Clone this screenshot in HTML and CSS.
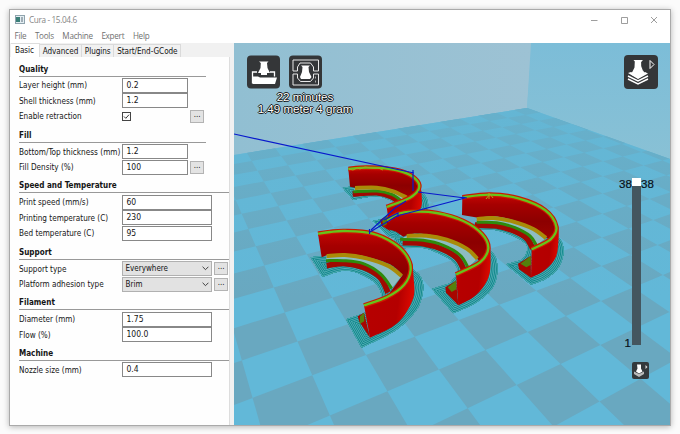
FILE: index.html
```html
<!DOCTYPE html>
<html lang="en">
<head>
<meta charset="utf-8">
<title>Cura - 15.04.6</title>
<link rel="stylesheet" href="styles.css">
</head>
<body>
<div class="window">
  <header class="titlebar">
    <svg class="app-icon" viewBox="0 0 10 9"><rect x=".5" y=".5" width="9" height="8" fill="#e4eef2" stroke="#8fa3ad"/><rect x="1" y="2" width="4" height="5" fill="#3b8078"/><path d="M7 2v5" stroke="#5b6d7a"/></svg>
    <span class="title">Cura - 15.04.6</span>
    <svg class="controls" viewBox="0 0 68 8" fill="none" stroke="#858585"><path d="M0 4.5h6.500M30.500 1.500h6v6h-6zM60 1l6 6M66 1l-6 6" stroke-width=".8"/></svg>
  </header>
  <nav class="menu"><span>File</span><span>Tools</span><span>Machine</span><span>Expert</span><span>Help</span></nav>
  <main class="content">
    <aside class="panel">
      <div class="tabs"><span class="tab active">Basic</span><span class="tab">Advanced</span><span class="tab">Plugins</span><span class="tab">Start/End-GCode</span></div>
      <div class="page">
        <section class="narrow"><h2>Quality</h2>
          <div class="row"><label>Layer height (mm)</label><div class="field">0.2</div></div>
          <div class="row"><label>Shell thickness (mm)</label><div class="field">1.2</div></div>
          <div class="row"><label>Enable retraction</label><div class="checkcell"><svg class="check" viewBox="0 0 9 9" fill="none"><rect x=".5" y=".5" width="8" height="8" stroke="#444"/><path d="M2 4.500l1.800 1.800L7 2.700" stroke="#222" stroke-width=".9"/></svg></div><div class="more">...</div></div>
        </section>
        <section class="narrow"><h2>Fill</h2>
          <div class="row"><label class="tight">Bottom/Top thickness (mm)</label><div class="field">1.2</div></div>
          <div class="row"><label>Fill Density (%)</label><div class="field">100</div><div class="more">...</div></div>
        </section>
        <section><h2>Speed and Temperature</h2>
          <div class="row"><label>Print speed (mm/s)</label><div class="field">60</div></div>
          <div class="row"><label>Printing temperature (C)</label><div class="field">230</div></div>
          <div class="row"><label>Bed temperature (C)</label><div class="field">95</div></div>
        </section>
        <section><h2>Support</h2>
          <div class="row"><label>Support type</label><div class="field select">Everywhere<svg viewBox="0 0 6 4"><path d="M.5.5 3 3 5.500.5" fill="none" stroke="#333" stroke-width=".8"/></svg></div><div class="more">...</div></div>
          <div class="row"><label>Platform adhesion type</label><div class="field select">Brim<svg viewBox="0 0 6 4"><path d="M.5.5 3 3 5.500.5" fill="none" stroke="#333" stroke-width=".8"/></svg></div><div class="more">...</div></div>
        </section>
        <section><h2>Filament</h2>
          <div class="row"><label>Diameter (mm)</label><div class="field">1.75</div></div>
          <div class="row"><label>Flow (%)</label><div class="field">100.0</div></div>
        </section>
        <section><h2>Machine</h2>
          <div class="row"><label>Nozzle size (mm)</label><div class="field">0.4</div></div>
        </section>
      </div>
    </aside>
    <div class="viewport">
      <svg class="scene" viewBox="234 43 436 382">
        <defs>
          <linearGradient id="wallL" x1="0" x2="1"><stop offset="0" stop-color="#91bfd2"/><stop offset="1" stop-color="#9dc2d4"/></linearGradient>
          <linearGradient id="wallR" x1="0" y1="0" x2="0" y2="1"><stop offset="0" stop-color="#7cbdd8"/><stop offset="1" stop-color="#89c1d5"/></linearGradient>
          <linearGradient id="haze" x1="0" y1="0" x2="0" y2="1"><stop offset="0" stop-color="#66b5d2" stop-opacity=".65"/><stop offset=".6" stop-color="#66b5d2" stop-opacity="0"/></linearGradient>
          <linearGradient id="inside" x1="0" y1="0" x2="0" y2="1"><stop offset="0" stop-color="#c40604"/><stop offset=".22" stop-color="#a60000"/><stop offset=".6" stop-color="#8c0000"/><stop offset="1" stop-color="#9c0400"/></linearGradient>
          <linearGradient id="outside" x1="0" y1="0" x2="1" y2=".2"><stop offset="0" stop-color="#cc0400"/><stop offset=".25" stop-color="#b60000"/><stop offset=".75" stop-color="#b40000"/><stop offset="1" stop-color="#d80800"/></linearGradient>
          <clipPath id="floorClip"><path d="M234 155 527 108 670 159V425H234z"/></clipPath>
        </defs>
        <path d="M234 43h298l-5 65-293 47z" fill="url(#wallL)"/>
        <path d="M531 43h139v117L527 108z" fill="url(#wallR)"/>
        <g clip-path="url(#floorClip)">
          <path d="M234 100h436v325H234z" fill="#62b8d8"/>
          <path id="tiles" fill="#69a8c0"/>
          <path d="M234 108h436v317H234z" fill="url(#haze)"/>
        </g>
        <g id="rings"></g>
        <g fill="none" stroke="#0818cc" stroke-width="1.200">
          <path d="M234 134 414 173M413 170v21M418 192l47 6-68 18-27 16M369.500 229v5M371 230l24-22 11-7M384 220l14-7v4M462 197l5 1"/>
        </g>
      </svg>
      <div class="tools">
        <svg class="tool" viewBox="0 0 33 33"><rect width="33" height="33" rx="4" fill="#343638"/><path d="M12 6h9.500L20 7.500l.5 5 2.500 5h-3v2h-6v-2h-3l2.500-5 .3-5z" fill="#fff"/><path d="M10 16.500H5.500V28M23 16.500h4.500V21" fill="none" stroke="#fff" stroke-width="1.300"/><path d="M6 28V21h5l2 1h17l-2 6.500H5z" fill="#fff"/></svg>
        <svg class="tool" viewBox="0 0 33 33"><rect width="33" height="33" rx="4" fill="#343638"/><path d="M12 10h9l-1.500 1.500.5 5 2.500 5-1.500 2h-9l-1-2 2-5 .5-5z" fill="#fff"/><path d="M4 4.500h25.500v11h-5v-4L21.500 7.500H11L8.500 11.500v4H4zM4 18.500h4.500v4l3 3.500h10l3-3.500v-4h5v11H4z" fill="none" stroke="#e8e8e8"/><path d="M26.500 21v2M26.500 25v2" stroke="#aaa"/></svg>
      </div>
      <div class="estimate">22 minutes<br>1.49 meter 4 gram</div>
      <svg class="view-mode" viewBox="0 0 34 34"><rect width="34" height="34" rx="4" fill="#343638"/><path d="M9.500 5h9.500l-1.500 1.500.5 6 3 7-7 4-7-4 3.500-7 .3-6z" fill="#fff"/><path d="M4 18l3-1 7 3 7-3 3 1.500-10 5.500z" fill="#fff"/><path d="M4 21l10 5 10-5M4 24l10 5 10-5" fill="none" stroke="#fff" stroke-width="1.500"/><path d="M26 5.500v8l4-4z" fill="none" stroke="#fff"/><path d="M17.500 7v4l2 5" stroke="#343638" fill="none" stroke-width=".8"/></svg>
      <div class="layers"><span class="max">38</span><div class="track"><i></i></div><span class="value">38</span><span class="min">1</span></div>
      <svg class="mini" viewBox="0 0 17 17"><rect width="17" height="17" rx="2" fill="#34393c"/><path d="M5 2.500h4v4l1.500 3-3.500 2-3-2L5.500 6.500z" fill="#fff"/><path d="M2 9.500l5 2.500 5-2.500v2.500l-5 3-5-3z" fill="#bbb"/><path d="M13.500 3v4l2-2z" fill="#ddd"/></svg>
    </div>
  </main>
</div>
<script src="scene.js"></script>
</body>
</html>
```
FILE: styles.css
```css
* { box-sizing: border-box; }
body { margin: 0; width: 680px; height: 434px; overflow: hidden; background: #fbfbfb; padding: 9px 0 0 9px; font: 8px "DejaVu Sans Condensed", "DejaVu Sans", sans-serif; color: #151515; }
.window { width: 662px; height: 417px; border: 1px solid #aaa; background: #fff; box-shadow: 0 1px 6px rgba(0,0,0,.28); display: flex; flex-direction: column; }
.titlebar { height: 19px; flex: none; display: flex; align-items: center; padding: 0 14px 0 5px; color: #858585; font: 8.200px "Open Sans", sans-serif; }
.app-icon { width: 10px; height: 9px; margin-right: 4px; }
.title { flex: 1; letter-spacing: -.35px; }
.controls { width: 68px; height: 8px; margin-right: -3px; }
.menu { height: 14px; flex: none; display: flex; gap: 8.6px; padding-left: 4.500px; align-items: center; color: #707070; font: 8.100px/14px "Open Sans", sans-serif; letter-spacing: -.25px; }
.content { flex: 1; display: flex; min-height: 0; }
.panel { width: 224px; background: #f1f1f1; display: flex; flex-direction: column; }
.tabs { display: flex; height: 14px; flex: none; padding-left: 1px; align-items: flex-end; }
.tab { height: 13px; line-height: 13px; padding: 0 2.800px; border: 1px solid #dadada; border-width: 1px 1px 0 0; white-space: nowrap; font-size: 8.100px; letter-spacing: -.06px; }
.tab.active { height: 14px; background: #fff; border-color: #ddd; padding: 0 5px 0 4px; line-height: 12px; }
.page { flex: 1; width: 220px; background: #fefefe; border-right: 1px solid #ddd; padding: 6.500px 0 0 9px; display: flex; flex-direction: column; gap: 5.500px; }
section { width: 210px; --field: 90px; flex: none; }
section.narrow { --field: 66px; }
h2 { margin: 0 0 1px; height: 13px; line-height: 12px; font-size: 8.050px; font-weight: bold; border-bottom: 1px solid #999; }
.narrow h2 { width: 187px; }
.row { height: 15.6px; display: grid; grid-template-columns: 102.800px var(--field) 15px; column-gap: .7px; align-items: center; }
.row label { white-space: nowrap; font-size: 8.100px; }
.row label.tight { font-size: 8.200px; }
.field { height: 15px; line-height: 13px; border: 1px solid #888; background: #fff; padding-left: 3px; font-size: 8.500px; }
.select { background: #e2e2e2; border-color: #b0b0b0; padding-left: 2px; display: flex; justify-content: space-between; align-items: center; padding-right: 2px; font-size: 8px; }
.select svg { width: 7px; height: 5px; }
.check { width: 9px; height: 9px; display: block; }
.more { height: 13px; border: 1px solid #b3b3b3; background: #e3e3e3; text-align: center; line-height: 8px; font-size: 8px; margin-left: 1px; }
.viewport { flex: 1; position: relative; overflow: hidden; background: #80bed6; }
.scene { display: block; width: 436px; height: 382px; }
.tools { position: absolute; left: 13px; top: 12px; display: flex; gap: 9px; }
.tool { width: 33px; height: 34px; }
.estimate { position: absolute; left: 11px; width: 120px; top: 48px; text-align: center; font: 11.600px/12px "Liberation Sans", sans-serif; color: #fff; white-space: nowrap; text-shadow: 1px 0 #111, -1px 0 #111, 0 1px #111, 0 -1px #111; }
.view-mode { position: absolute; left: 390px; top: 12px; width: 34px; height: 34px; }
.layers { position: absolute; left: 385px; top: 135px; display: grid; grid-template-columns: 13px 9px 13px; grid-template-rows: 155px 12px; font: 11.500px/12px "Liberation Sans", sans-serif; color: #081018; -webkit-text-stroke: .2px #081018; }
.track { grid-row: 1 / 3; grid-column: 2; background: #44565f; }
.track i { display: block; height: 8px; background: #fff; }
.value { grid-column: 3; grid-row: 1; }
.min { grid-column: 1; grid-row: 2; text-align: right; padding-right: 1px; margin-top: 4px; }
.mini { position: absolute; left: 398px; top: 319px; width: 17px; height: 17px; }
```
FILE: scene.js
```js
// Checkered platform: a least-squares plane projection through known grid crossings [u, v, x, y].
const crossings = [
  [0, 0, 527.3, 332.3], [1, 0, 560, 364.3], [2, 0, 601.7, 402.7], [-1, 0, 500, 305],
  [0, 1, 567.3, 315.7], [1, 1, 600.7, 344.3], [2, 1, 643.3, 380], [-1, 1, 530, 290.7],
  [0, 2, 601.7, 300], [-1, 2, 568.3, 277.3], [0, 3, 633.3, 287.5], [1, 2, 636.7, 327.7], [1, 3, 666.7, 313.3],
  [0, -1, 485, 350], [1, -1, 518.3, 385], [0, -2, 440, 369], [1, -2, 468.3, 410], [-1, -1, 461.7, 319],
  [-1, 3, 600, 265.5], [-1, 4, 630, 255], [0, 4, 661.7, 274], [-2, 4, 600, 237.7], [-2, 5, 630, 228],
  [-1, 5, 657, 243.5], [-3, 5, 601.5, 213.5], [-3, 6, 629, 206.8], [-2, 6, 653, 220], [-4, 6, 605, 195],
  [-1, -3, 365.7, 355], [0, -3, 385.7, 391.7], [-1, -2, 416.3, 335], [-2, -3, 344, 326], [-2, -4, 297.3, 340.7], [-1, -4, 315.7, 375]
];
function fitPlane(points) {
  const m = Array.from({ length: 8 }, () => new Array(9).fill(0));
  const add = r => { for (let i = 0; i < 8; i++) for (let j = 0; j < 9; j++) m[i][j] += r[i] * r[j]; };
  for (const [u, v, px, py] of points) {
    const x = px / 100, y = py / 100;
    add([u, v, 1, 0, 0, 0, -u * x, -v * x, x]);
    add([0, 0, 0, u, v, 1, -u * y, -v * y, y]);
  }
  for (let i = 0; i < 8; i++) {
    let p = i;
    for (let k = i; k < 8; k++) if (Math.abs(m[k][i]) > Math.abs(m[p][i])) p = k;
    [m[i], m[p]] = [m[p], m[i]];
    for (let k = 0; k < 8; k++) if (k !== i) {
      const f = m[k][i] / m[i][i];
      for (let j = i; j < 9; j++) m[k][j] -= f * m[i][j];
    }
  }
  return m.map((r, i) => r[8] / r[i]);
}
const h = fitPlane(crossings);
const depth = (u, v) => h[6] * u + h[7] * v + 1;
const project = (u, v) => {
  const w = depth(u, v);
  return (100 * (h[0] * u + h[1] * v + h[2]) / w).toFixed(1) + ' ' + (100 * (h[3] * u + h[4] * v + h[5]) / w).toFixed(1);
};
let tiles = '';
for (let u = -22; u < 8; u++) for (let v = -14; v < 22; v++) {
  if ((u + v) % 2) continue;
  const corners = [[u, v], [u + 1, v], [u + 1, v + 1], [u, v + 1]];
  if (corners.some(c => depth(...c) < 0.15)) continue;
  tiles += 'M' + corners.map(c => project(...c)).join('L') + 'z';
}
document.getElementById('tiles').setAttribute('d', tiles);

// Smooth curve through a list of points.
function curve(p, join) {
  let d = (join || 'M') + p[0];
  for (let i = 0; i < p.length - 1; i++) {
    const a = p[i - 1] || p[i], b = p[i], c = p[i + 1], e = p[i + 2] || c;
    d += 'C' + [b[0] + (c[0] - a[0]) / 6, b[1] + (c[1] - a[1]) / 6, c[0] - (e[0] - b[0]) / 6, c[1] - (e[1] - b[1]) / 6, c[0], c[1]].join(' ');
  }
  return d;
}

// Printed half rings, back to front, each in its own triple-scale coordinates.
const rings = [
  { at: [310, 155], rim: [[115, 42], [170, 38], [240, 42], [290, 55], [322, 78], [326, 103], [300, 128], [230, 156]],
    base: [[290, 128], [250, 108], [200, 96], [135, 98]], left: [[120, 95]],
    yellow: [[135, 99], [200, 98], [250, 109], [290, 128]], green: [[130, 110], [200, 108], [245, 118], [275, 138]],
    lip: [[128, 117], [200, 113], [245, 125], [270, 145]],
    outer: [[330, 85], [335, 120], [332, 160], [300, 172], [265, 190], [240, 228]], block: [[210, 195], [232, 180], [240, 228], [215, 212]],
    brimIn: [[270, 158], [250, 140], [200, 124], [130, 135]], brimTip: [[98, 98], [120, 95]],
    brimOut: [[328, 105], [350, 130], [352, 165], [320, 195], [260, 250]], brimEnd: [[238, 245], [188, 198], [230, 190]] },
  { at: [430, 180], rim: [[97, 52], [180, 44], [265, 55], [345, 90], [379, 140], [362, 178], [305, 208]],
    base: [[352, 175], [310, 145], [250, 120], [190, 109], [145, 113]], left: [[96, 105]],
    yellow: [[140, 117], [190, 114], [250, 125], [310, 147], [348, 174]], green: [[140, 127], [200, 128], [255, 143], [300, 168], [319, 196]],
    lip: [[135, 135], [200, 138], [250, 152], [290, 175], [308, 205]],
    outer: [[384, 135], [386, 170], [378, 230], [345, 270], [303, 293]], block: [[264, 251], [302, 228], [303, 293], [267, 268]],
    brimIn: [[287, 225], [290, 195], [250, 168], [195, 150], [140, 148]], brimTip: [[120, 130], [150, 130]],
    brimOut: [[380, 165], [397, 190], [400, 225], [382, 268], [345, 298], [303, 314]], brimEnd: [[228, 253], [275, 240]] },
  { at: [360, 190], rim: [[82, 92], [110, 73], [160, 65], [230, 69], [310, 93], [366, 132], [385, 175], [360, 217], [288, 253]],
    base: [[355, 210], [330, 180], [280, 154], [220, 136], [160, 131], [130, 140]], left: [[108, 125], [78, 115]],
    yellow: [[140, 138], [200, 137], [260, 149], [320, 176], [352, 206]], green: [[120, 148], [190, 151], [250, 166], [300, 195], [324, 232]],
    lip: [[128, 158], [190, 161], [245, 177], [290, 203], [312, 240]],
    outer: [[389, 165], [392, 195], [389, 250], [372, 288], [340, 322], [295, 346]], block: [[256, 292], [288, 272], [295, 346], [258, 308]],
    brimIn: [[285, 260], [292, 235], [270, 208], [235, 190], [190, 174], [115, 175]], brimTip: [[100, 140], [120, 140]],
    brimOut: [[390, 180], [408, 205], [412, 250], [395, 298], [345, 340], [280, 370]], brimEnd: [[216, 297], [270, 280]] },
  { at: [300, 220], rim: [[54, 41], [90, 36], [135, 33], [215, 40], [280, 69], [320, 108], [332, 150], [312, 195], [260, 232], [192, 256]],
    base: [[308, 165], [270, 133], [200, 110], [135, 102], [80, 106]], left: [[65, 112]],
    yellow: [[80, 108], [135, 105], [200, 115], [265, 138], [305, 168]], green: [[78, 122], [130, 122], [190, 131], [242, 162], [275, 205]],
    lip: [[80, 137], [130, 130], [190, 142], [240, 172], [264, 218]],
    outer: [[337, 130], [341, 175], [341, 230], [310, 290], [270, 325], [210, 353]], block: [[173, 289], [192, 278], [210, 353], [178, 305]],
    brimIn: [[240, 245], [243, 220], [225, 188], [180, 162], [130, 152], [68, 170]], brimTip: [[32, 112], [66, 108]],
    brimOut: [[340, 150], [362, 170], [370, 205], [358, 255], [330, 293], [280, 335], [185, 383]], brimEnd: [[138, 298], [192, 280]] }
];
const path = (d, attrs) => `<path d="${d}" ${attrs}/>`;
const line = (points, color, width) => path(curve(points), `fill="none" stroke="${color}" stroke-width="${width}"`);
let art = '';
rings.forEach((r, n) => {
  const brim = 'M' + r.brimTip.join('L') + 'L' + r.rim[Math.floor(r.rim.length / 2)] + curve(r.brimOut, 'L') + 'L' + r.brimEnd.join('L') + curve(r.brimIn, 'L') + 'z';
  art += `<clipPath id="brim${n}">${path(brim, '')}</clipPath><g transform="translate(${r.at}) scale(.33333)">`;
  art += `<g clip-path="url(#brim${n})">` + path(brim, 'fill="#48a0a8"');
  for (let w = 70; w > 0; w -= 5) art += path(brim, `fill="none" stroke="${w % 2 ? '#56afb6' : '#0c8489'}" stroke-width="${w}"`);
  art += '</g>';
  art += path(curve(r.green) + curve([...r.yellow].reverse(), 'L') + 'z', 'fill="#8dbdc2"');
  art += line(r.lip, '#a00a02', 17) + line(r.green, '#2e8b0c', 9);
  art += path('M' + r.block.join('L') + 'z', 'fill="#a80600"') + path(`M${r.block[0][0] + 7} ${r.block[0][1]}L${r.block[1]}l1 26-14 8z`, 'fill="#54810c"');
  art += path(curve(r.rim.slice(0, -1)) + curve(r.base, 'L') + 'L' + r.left.join('L') + 'z', 'fill="url(#inside)"');
  art += line(r.yellow, '#a98b08', 12);
  const half = r.rim.slice(-3).reverse();
  art += path(curve(half) + curve(r.outer, 'L') + 'z', 'fill="url(#outside)"');
  art += line(r.rim, '#cc1800', 14) + line(r.rim, '#66c41a', 7) + '</g>';
});
art += path('M349 169l4 1 4-2 3 1 5-2 7 1 6 0 5 2M486 199l4-5 3 4M489 193v6', 'fill="none" stroke="#a5a51a" stroke-width="1"');
document.getElementById('rings').innerHTML = art;
```
